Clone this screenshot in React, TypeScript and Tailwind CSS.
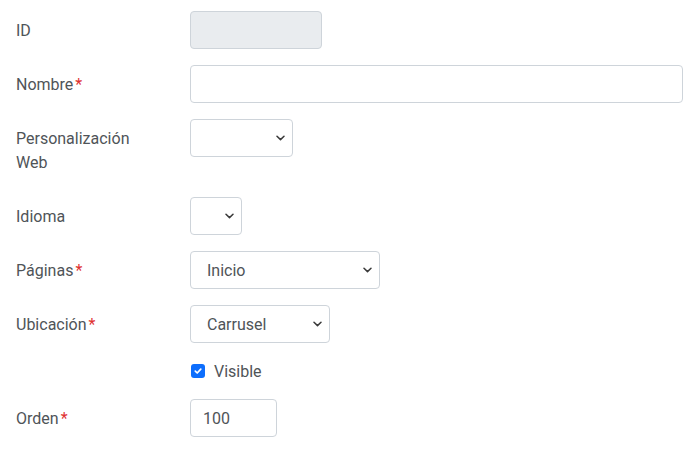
import React from "react";

const Chevron = () => (
  <svg width="9" height="6" viewBox="0 0 9 6" className="shrink-0">
    <path d="M1 1.2 L4.5 4.6 L8 1.2" fill="none" stroke="#3a3a3a" strokeWidth="1.5" strokeLinecap="round" strokeLinejoin="round" />
  </svg>
);

const Req = () => <span className="ml-[2px] text-[#e03131]">*</span>;

const Label = ({ children }: { children: React.ReactNode }) => (
  <div className="w-[174px] shrink-0 pt-[8px] pb-[6px] pr-[30px] leading-6">{children}</div>
);

const Select = ({ w, text }: { w: string; text?: string }) => (
  <div className={`${w} h-[38px] border border-[#ced4da] rounded bg-white flex items-center justify-between pl-4 pr-[7px]`}>
    <span className="pt-px">{text ?? ""}</span>
    <Chevron />
  </div>
);

export default function App() {
  return (
    <div
      className="w-[700px] h-[449px] bg-white text-[16px] text-[#4f5458] px-4 pt-[11px] flex flex-col gap-4"
      style={{ fontFamily: "Roboto, 'Liberation Sans', sans-serif" }}
    >
      <div className="flex items-start">
        <Label>ID</Label>
        <div className="w-[132px] h-[38px] border border-[#ced4da] rounded bg-[#e9ecef]" />
      </div>
      <div className="flex items-start">
        <Label>
          Nombre<Req />
        </Label>
        <div className="w-[493px] h-[38px] border border-[#ced4da] rounded bg-white" />
      </div>
      <div className="flex items-start">
        <Label>Personalización Web</Label>
        <Select w="w-[103px]" />
      </div>
      <div className="flex items-start">
        <Label>Idioma</Label>
        <Select w="w-[52px]" />
      </div>
      <div className="flex items-start">
        <Label>
          Páginas<Req />
        </Label>
        <Select w="w-[190px]" text="Inicio" />
      </div>
      <div className="flex items-start">
        <Label>
          Ubicación<Req />
        </Label>
        <Select w="w-[140px]" text="Carrusel" />
      </div>
      <div className="flex h-6 items-center">
        <div className="w-[174px] shrink-0" />
        <div className="ml-px w-[14px] h-[14px] rounded-[3px] bg-[#0d6efd] flex items-center justify-center">
          <svg width="10" height="10" viewBox="0 0 10 10">
            <path d="M2.3 5.2 L4.2 7 L7.8 3.2" fill="none" stroke="white" strokeWidth="1.7" strokeLinecap="round" strokeLinejoin="round" />
          </svg>
        </div>
        <span className="ml-[9px] leading-6 pt-px">Visible</span>
      </div>
      <div className="flex items-start">
        <Label>
          Orden<Req />
        </Label>
        <div className="w-[87px] h-[38px] border border-[#ced4da] rounded bg-white flex items-center pl-3 pt-px">100</div>
      </div>
    </div>
  );
}
